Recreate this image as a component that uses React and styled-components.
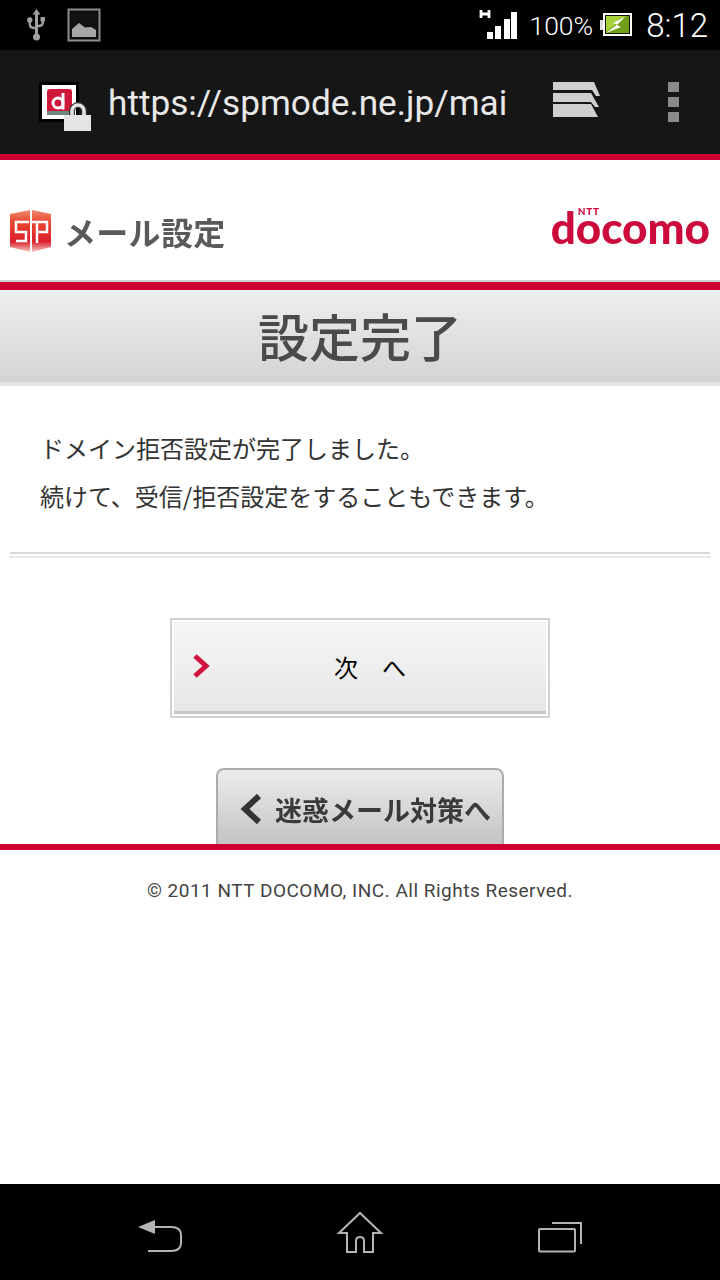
import React from "react";
import styled, { createGlobalStyle } from "styled-components";

const GlobalStyle = createGlobalStyle`
  html, body {
    margin: 0;
    padding: 0;
    background: #fff;
  }
  * {
    box-sizing: border-box;
  }
`;

const CJK = `"Noto Sans CJK JP", "Noto Sans CJK SC", sans-serif`;

const UsbIcon = () => (
  <svg width="18" height="32" viewBox="0 0 18 32">
    <path d="M9.500 0 L13.500 5.500 L11 5.500 L11 25 L8 25 L8 5.500 L5.500 5.500 Z" fill="#a0a0a0" />
    <circle cx="9.500" cy="28" r="3.500" fill="#a0a0a0" />
    <circle cx="2.800" cy="11" r="2.700" fill="#a0a0a0" />
    <rect x="13.500" y="8" width="4.500" height="4.500" fill="#a0a0a0" />
    <path d="M2.800 12 V15 Q2.800 19 7 19 H9 M15.800 11 V13 Q15.800 17 12 17 H10" fill="none" stroke="#a0a0a0" strokeWidth="2.400" />
  </svg>
);

const PictureIcon = () => (
  <svg width="34" height="34" viewBox="0 0 34 34">
    <rect x="1.500" y="1.500" width="31" height="31" fill="#111" stroke="#8e8e8e" strokeWidth="2" />
    <path d="M5 29 V21 L12 15 L18 19.500 L24 19 L29 22 V29 Z" fill="#a6a6a6" />
  </svg>
);

const SignalIcon = () => (
  <svg width="38" height="32" viewBox="0 0 38 32">
    <path d="M2 1 V9 M10 1 V9 M2 5 H10" stroke="#fff" strokeWidth="2.800" fill="none" />
    <rect x="8" y="23" width="6" height="7" fill="#fff" />
    <rect x="16" y="17" width="6" height="13" fill="#fff" />
    <rect x="25" y="10" width="6" height="20" fill="#fff" />
    <rect x="32" y="3" width="6" height="27" fill="#fff" />
  </svg>
);

const BatteryIcon = () => (
  <svg width="32" height="24" viewBox="0 0 32 24">
    <rect x="0" y="7" width="3" height="10" fill="#ddd" />
    <rect x="4" y="1" width="27" height="21" fill="#111" stroke="#fff" strokeWidth="2" />
    <rect x="6" y="3" width="23" height="17" fill="#6f9f18" />
    <path d="M6 3 H26 L6 19 Z" fill="#a6d23c" />
    <path d="M25 4 L13 10 L17 11.500 L6 20 L21 14 L17 12 Z" fill="#fff" />
  </svg>
);

const Favicon = () => (
  <svg width="54" height="50" viewBox="0 0 54 50">
    <rect x="0" y="0" width="40" height="40" fill="#000" />
    <rect x="3" y="3" width="34" height="34" fill="#fff" />
    <rect x="8" y="7" width="25" height="26" rx="3" fill="#d0183a" />
    <rect x="8" y="29" width="25" height="4" fill="#6d8a80" />
    <circle cx="19" cy="21" r="5" fill="none" stroke="#fff" strokeWidth="3" />
    <path d="M24 11 V27.500" stroke="#fff" strokeWidth="3" />
    <path d="M33 33 V29 A6 6 0 0 1 45 29 V33" fill="none" stroke="#333" strokeWidth="6" />
    <path d="M33 33 V29 A6 6 0 0 1 45 29 V33" fill="none" stroke="#e4e4e4" strokeWidth="3.500" />
    <rect x="25" y="33" width="27" height="16" fill="#e4e4e4" />
  </svg>
);

const TabsIcon = () => (
  <svg width="48" height="36" viewBox="0 0 48 36">
    <path d="M0 0 H41 L47 14 L43 14 L39 8 H0 Z" fill="#cfcfcf" />
    <path d="M0 11 H38 L46 25 L42 25 L38 20 H0 Z" fill="#cfcfcf" />
    <path d="M0 22 H38 L45 35 H0 Z" fill="#cfcfcf" />
  </svg>
);

const SpLogo = () => (
  <LogoMark width="44" height="44" viewBox="0 0 44 44">
    <defs>
      <linearGradient id="spRed" x1="0" y1="0" x2="0" y2="1">
        <stop offset="0" stopColor="#ee8a6c" />
        <stop offset="0.3" stopColor="#e8452f" />
        <stop offset="0.75" stopColor="#dc1f2d" />
        <stop offset="1" stopColor="#f4c8bf" />
      </linearGradient>
    </defs>
    <path d="M1 5 L21 1 V43 L1 38 Z" fill="url(#spRed)" />
    <path d="M23 1 L42 5 V38 L23 43 Z" fill="url(#spRed)" />
    <path d="M20 13 H7 V23 H17 V32 H7" fill="none" stroke="#fff" strokeWidth="2.500" />
    <path d="M23 13 H38 V23 H28 M28 13 V34" fill="none" stroke="#fff" strokeWidth="2.500" />
  </LogoMark>
);

const RedChevron = () => (
  <svg width="18" height="26" viewBox="0 0 18 26">
    <path d="M3 3 L14 13 L3 23" fill="none" stroke="#d0123f" strokeWidth="5" />
  </svg>
);

const DarkChevron = () => (
  <DarkMark width="22" height="30" viewBox="0 0 22 30">
    <path d="M19 2 L5 15 L19 28" fill="none" stroke="#333" strokeWidth="6" />
  </DarkMark>
);

const BackIcon = () => (
  <svg width="48" height="42" viewBox="0 0 48 42">
    <path d="M2 16 L19 9 V23 Z" fill="#b4b4b4" />
    <path d="M18 16 H35 Q45 16 45 24 V32 Q45 40 35 40 H12" fill="none" stroke="#b4b4b4" strokeWidth="2" />
  </svg>
);

const HomeIcon = () => (
  <svg width="48" height="42" viewBox="0 0 48 42">
    <path d="M11 41 V22 H3 L24 2 L45 22 H37 V41 H28 V30 Q28 26 24 26 Q20 26 20 30 V41 Z" fill="none" stroke="#b4b4b4" strokeWidth="2" />
  </svg>
);

const RecentsIcon = () => (
  <svg width="48" height="42" viewBox="0 0 48 42">
    <rect x="3" y="18" width="36" height="22.500" rx="1" fill="none" stroke="#b4b4b4" strokeWidth="2" />
    <path d="M16 12 H45 V33" fill="none" stroke="#b4b4b4" strokeWidth="2" />
  </svg>
);

const App = () => {
  return (
    <Screen>
      <GlobalStyle />
      <StatusBar>
        <StatusLeft>
          <UsbIcon />
          <PictureIcon />
        </StatusLeft>
        <StatusRight>
          <SignalIcon />
          <Percent>100%</Percent>
          <BatteryIcon />
          <Clock>8:12</Clock>
        </StatusRight>
      </StatusBar>

      <BrowserBar>
        <Favicon />
        <Url>https://spmode.ne.jp/mai</Url>
        <TabsIcon />
        <MenuDots>
          <Dot />
          <Dot />
          <Dot />
        </MenuDots>
      </BrowserBar>

      <PageHeader>
        <Brand>
          <SpLogo />
          <BrandName>メール設定</BrandName>
        </Brand>
        <Docomo>
          <Ntt>NTT</Ntt>
          docomo
        </Docomo>
      </PageHeader>

      <TitleBand>設定完了</TitleBand>

      <Content>
        <Message>
          <MessageLine>ドメイン拒否設定が完了しました。</MessageLine>
          <MessageLine>続けて、受信/拒否設定をすることもできます。</MessageLine>
        </Message>
        <Divider />
        <NextButton>
          <RedChevron />
          <NextLabel>次　へ</NextLabel>
        </NextButton>
        <BackButton>
          <DarkChevron />
          <BackLabel>迷惑メール対策へ</BackLabel>
        </BackButton>
      </Content>

      <Footer>© 2011 NTT DOCOMO, INC. All Rights Reserved.</Footer>

      <NavBar>
        <NavSlot><BackIcon /></NavSlot>
        <NavSlot><HomeIcon /></NavSlot>
        <NavSlot><RecentsIcon /></NavSlot>
      </NavBar>
    </Screen>
  );
};

const Screen = styled.div`
  width: 720px;
  height: 1280px;
  display: flex;
  flex-direction: column;
  overflow: hidden;
  background: #fff;
  font-family: ${CJK};
`;

const StatusBar = styled.div`
  height: 50px;
  flex: none;
  background: #000;
  display: flex;
  align-items: center;
  justify-content: space-between;
  padding: 0 12px 0 27px;
`;

const StatusLeft = styled.div`
  display: flex;
  align-items: center;
  gap: 22px;
`;

const StatusRight = styled.div`
  display: flex;
  align-items: center;
  color: #fff;
  font-family: Roboto, sans-serif;
  font-weight: 300;
`;

const Percent = styled.span`
  font-size: 26.5px;
  margin: 0 7px 0 12px;
`;

const Clock = styled.span`
  font-size: 33px;
  margin-left: 14px;
`;

const BrowserBar = styled.div`
  height: 104px;
  flex: none;
  background: #161616;
  display: flex;
  align-items: flex-start;
  padding: 32px 0 0 39px;
`;

const Url = styled.div`
  width: 445px;
  margin-left: 15px;
  color: #e8e8e8;
  font-family: Roboto, sans-serif;
  font-weight: 400;
  font-size: 35.2px;
  line-height: 42px;
  white-space: nowrap;
  overflow: hidden;
`;

const MenuDots = styled.div`
  display: flex;
  flex-direction: column;
  gap: 5px;
  margin-left: 67px;
`;

const Dot = styled.span`
  width: 11px;
  height: 10px;
  background: #8a8a8a;
`;

const PageHeader = styled.div`
  height: 126px;
  flex: none;
  border-top: 6px solid #cc0033;
  display: flex;
  align-items: center;
  justify-content: space-between;
  padding: 22px 10px 0 9px;
`;

const Brand = styled.div`
  display: flex;
  align-items: center;
  gap: 11px;
`;

const LogoMark = styled.svg`
  filter: blur(0.5px);
`;

const DarkMark = styled.svg`
  filter: blur(0.5px);
`;

const BrandName = styled.span`
  font-size: 32px;
  font-weight: 700;
  letter-spacing: 0.3px;
  color: #5a5a5a;
  line-height: 44px;
  filter: blur(0.6px);
`;

const Docomo = styled.div`
  position: relative;
  padding-bottom: 8px;
  font-family: Lato, sans-serif;
  font-weight: 900;
  font-size: 44px;
  line-height: 44px;
  color: #cc0a3c;
  filter: blur(0.5px);
`;

const Ntt = styled.span`
  position: absolute;
  left: 27px;
  top: 2px;
  font-size: 10px;
  line-height: 9px;
  letter-spacing: 0.8px;
`;

const TitleBand = styled.div`
  height: 106px;
  flex: none;
  border-top: 2px solid #cfcfcf;
  background:
    linear-gradient(#cc0033, #cc0033) top / 100% 8px no-repeat,
    linear-gradient(#f0f0f0, #d4d4d4);
  border-bottom: 4px solid #e4e4e4;
  padding-top: 6px;
  display: flex;
  align-items: center;
  justify-content: center;
  font-size: 51px;
  font-weight: 500;
  color: #4a4a4a;
  filter: blur(0.5px);
`;

const Content = styled.div`
  flex: 1;
  min-height: 0;
  overflow: hidden;
  display: flex;
  flex-direction: column;
  align-items: center;
`;

const Message = styled.div`
  align-self: stretch;
  padding: 45px 40px 0;
`;

const MessageLine = styled.p`
  margin: 0 0 14px;
  font-size: 24px;
  line-height: 34px;
  color: #333;
`;

const Divider = styled.div`
  align-self: stretch;
  height: 6px;
  flex: none;
  margin: 25px 10px 0;
  border-top: 2px solid #d8d8d8;
  border-bottom: 2px solid #e8e8e8;
`;

const NextButton = styled.div`
  width: 380px;
  height: 100px;
  margin-top: 60px;
  flex: none;
  display: flex;
  align-items: center;
  padding: 0 0 4px 20px;
  border: 2px solid #d2d2d2;
  background:
    linear-gradient(#c6c6c6, #c6c6c6) left 0 bottom 2px / 100% 3px no-repeat,
    linear-gradient(#f6f6f6, #e6e6e6);
  box-shadow: inset 0 0 0 2px #fff;
`;

const NextLabel = styled.span`
  margin-left: 124px;
  font-size: 24px;
  color: #000;
`;

const BackButton = styled.div`
  width: 288px;
  height: 90px;
  margin-top: 50px;
  flex: none;
  display: flex;
  align-items: flex-start;
  padding: 24px 0 0 22px;
  border: 2px solid #acacac;
  border-radius: 8px;
  background: linear-gradient(#ececec, #bdbdbd);
`;

const BackLabel = styled.span`
  margin-left: 13px;
  font-size: 27px;
  line-height: 32px;
  font-weight: 700;
  color: #3a3a3a;
  white-space: nowrap;
  filter: blur(0.5px);
`;

const Footer = styled.div`
  flex: none;
  height: 340px;
  border-top: 6px solid #cc0033;
  padding-top: 30px;
  text-align: center;
  font-family: Roboto, sans-serif;
  font-size: 19px;
  line-height: 22px;
  letter-spacing: 0.5px;
  color: #444;
`;

const NavBar = styled.div`
  height: 96px;
  flex: none;
  background: #000;
  display: grid;
  grid-template-columns: repeat(3, 200px);
  justify-content: center;
  align-items: center;
`;

const NavSlot = styled.div`
  display: flex;
  justify-content: center;
`;

export default App;
